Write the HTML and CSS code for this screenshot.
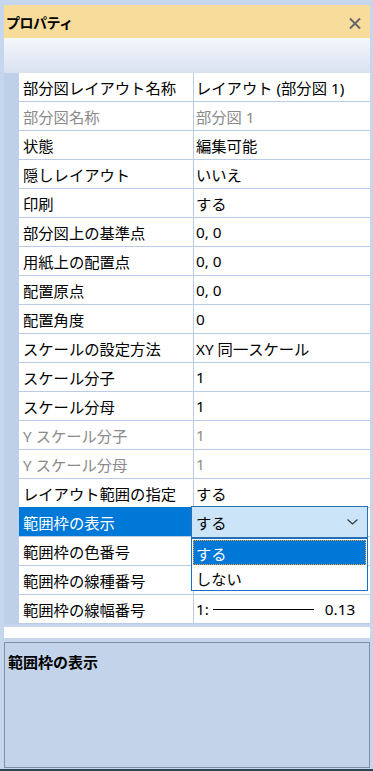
FILE: index.html
```html
<!DOCTYPE html>
<html lang="ja">

<head>
    <meta charset="UTF-8">
    <meta name="viewport" content="width=device-width, initial-scale=1.0">
    <title>プロパティ</title>
    <link rel="stylesheet" href="styles.css">
</head>

<body>
    <div class="window">
        <div class="titlebar">
            <span class="title">プロパティ</span>
            <svg class="close-btn" width="12" height="11" viewBox="0 0 12 11">
                <path d="M1 0.5 L11 10.5 M11 0.5 L1 10.5" stroke="#666" stroke-width="2" />
            </svg>
        </div>
        <div class="toolbar"></div>

        <!-- Property grid -->
        <div class="grid">
            <div class="rows">
                <div class="row"><div class="name">部分図レイアウト名称</div><div class="value">レイアウト (部分図 1)</div></div>
                <div class="row disabled"><div class="name">部分図名称</div><div class="value">部分図 1</div></div>
                <div class="row"><div class="name">状態</div><div class="value">編集可能</div></div>
                <div class="row"><div class="name">隠しレイアウト</div><div class="value">いいえ</div></div>
                <div class="row"><div class="name">印刷</div><div class="value">する</div></div>
                <div class="row"><div class="name">部分図上の基準点</div><div class="value">0, 0</div></div>
                <div class="row"><div class="name">用紙上の配置点</div><div class="value">0, 0</div></div>
                <div class="row"><div class="name">配置原点</div><div class="value">0, 0</div></div>
                <div class="row"><div class="name">配置角度</div><div class="value">0</div></div>
                <div class="row"><div class="name">スケールの設定方法</div><div class="value">XY 同一スケール</div></div>
                <div class="row"><div class="name">スケール分子</div><div class="value">1</div></div>
                <div class="row"><div class="name">スケール分母</div><div class="value">1</div></div>
                <div class="row disabled"><div class="name">Y スケール分子</div><div class="value">1</div></div>
                <div class="row disabled"><div class="name">Y スケール分母</div><div class="value">1</div></div>
                <div class="row"><div class="name">レイアウト範囲の指定</div><div class="value">する</div></div>
                <div class="row selected">
                    <div class="name">範囲枠の表示</div>
                    <div class="value">
                        <div class="combo">
                            <span>する</span>
                            <svg class="chevron" width="11" height="6" viewBox="0 0 11 6">
                                <path d="M0.5 0.5 L5.5 5 L10.5 0.5" fill="none" stroke="#333" stroke-width="1.1" />
                            </svg>
                        </div>
                        <div class="combo-list">
                            <div class="option active">する</div>
                            <div class="option">しない</div>
                        </div>
                    </div>
                </div>
                <div class="row"><div class="name">範囲枠の色番号</div><div class="value"></div></div>
                <div class="row"><div class="name">範囲枠の線種番号</div><div class="value"></div></div>
                <div class="row">
                    <div class="name">範囲枠の線幅番号</div>
                    <div class="value line-width"><span>1:</span><span class="line"></span><span>0.13</span></div>
                </div>
            </div>
        </div>

        <div class="strip"></div>

        <!-- Description area -->
        <div class="help">
            <div class="help-title">範囲枠の表示</div>
        </div>
    </div>
</body>

</html>
```

FILE: styles.css
```css
/* General Styles */
html,
body {
    margin: 0;
    padding: 0;
}

body {
    font-family: "Noto Sans", "Noto Sans CJK JP", sans-serif;
    color: #000;
}

.window {
    width: 373px;
    height: 771px;
    box-sizing: border-box;
    padding: 5px 3px 0 4px;
    background-color: #c6d6ec;
    border-bottom: 2px solid #2d4656;
    display: flex;
    flex-direction: column;
}

.titlebar {
    height: 33px;
    flex-shrink: 0;
    background-color: #f8dc9c;
    display: flex;
    align-items: center;
    justify-content: space-between;
    padding: 0 9px 0 2px;
}

.title {
    font-size: 14px;
    font-weight: bold;
    letter-spacing: -0.5px;
}

.close-btn {
    margin-top: 4px;
}

.toolbar {
    height: 35px;
    flex-shrink: 0;
    background: linear-gradient(#f4f7fb, #d9e1f0);
}

/* Property grid */
.grid {
    flex-shrink: 0;
    padding-left: 15px;
    background-color: #bed0e9;
}

.rows {
    background-color: #fff;
}

.row {
    display: grid;
    grid-template-columns: 175px 1fr;
    height: 29px;
    box-sizing: border-box;
    border-bottom: 1px solid #b9cbe7;
    font-size: 15.3px;
}

.name,
.value {
    display: flex;
    align-items: center;
    white-space: nowrap;
}

.name {
    padding-left: 4px;
    border-right: 1px solid #b9cbe7;
}

.value {
    padding-left: 2px;
    position: relative;
}

.disabled {
    color: #8a8a8a;
}

.selected .name {
    background-color: #0078d7;
    color: #fff;
    margin-top: -1px;
}

/* Dropdown */
.combo {
    position: absolute;
    left: -3px;
    top: -2px;
    width: 177px;
    height: 32px;
    box-sizing: border-box;
    padding: 0 9px 0 4px;
    background-color: #cce4f7;
    border: 1px solid #2b6fae;
    display: flex;
    align-items: center;
    justify-content: space-between;
    z-index: 2;
}

.combo-list {
    position: absolute;
    left: -3px;
    top: 30px;
    width: 177px;
    height: 53px;
    box-sizing: border-box;
    padding: 1px;
    background-color: #fff;
    border: 1px solid #1a6fc2;
    z-index: 3;
}

.option {
    height: 25px;
    box-sizing: border-box;
    padding-left: 3px;
    display: flex;
    align-items: center;
}

.option.active {
    background-color: #0078d7;
    color: #fff;
    outline: 1px dotted #f0a040;
    outline-offset: -1px;
}

.line {
    width: 101px;
    height: 1px;
    background-color: #000;
    margin: 0 11px 0 4px;
}

.strip {
    height: 11px;
    margin-top: 3px;
    flex-shrink: 0;
    background-color: #fff;
}

/* Description area */
.help {
    flex: 1;
    margin: 4px 0 1px;
    background-color: #c2d3ea;
    border: 1px solid #7f8fa7;
}

.help-title {
    font-size: 15px;
    font-weight: bold;
    padding: 8px 0 0 3px;
}
```
